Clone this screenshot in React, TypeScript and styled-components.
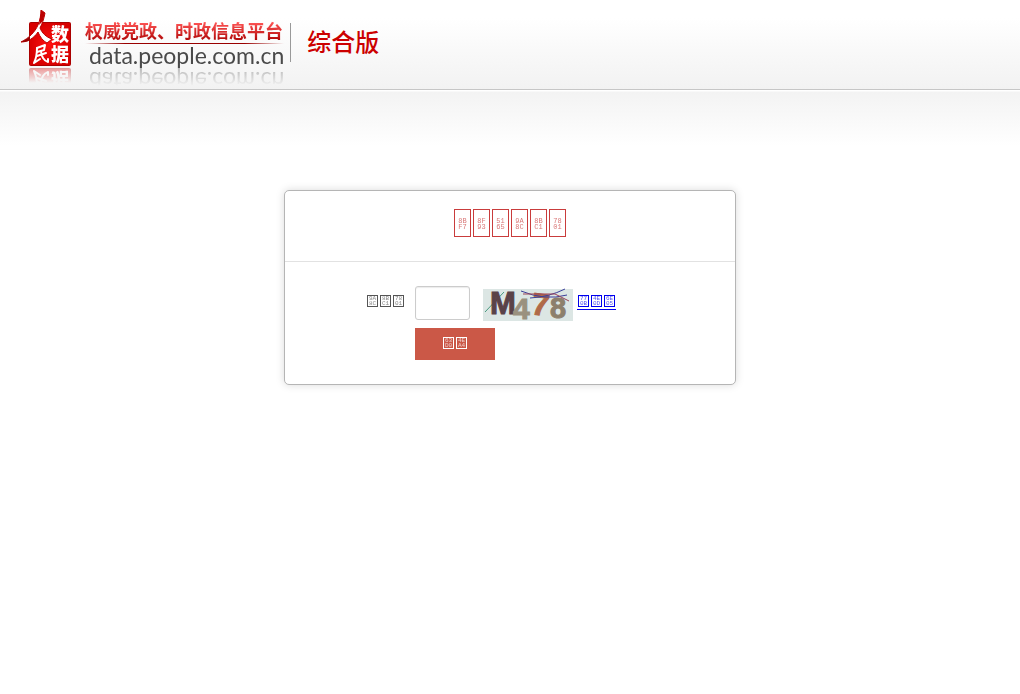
import React from "react";
import styled, { createGlobalStyle, css } from "styled-components";

const GlobalStyle = createGlobalStyle`
  *, *::before, *::after { box-sizing: border-box; }
  body {
    margin: 0;
    background: #fff;
    color: #555;
    font: 12px/20px "Liberation Sans", "Noto Sans CJK SC", sans-serif;
  }
`;

const Header = styled.header`
  display: flex;
  align-items: flex-start;
  height: 90px;
  padding: 10px 20px 0;
  border-bottom: 1px solid #c6c6c6;
  background: linear-gradient(#fff 20%, #f2f2f2);
`;

const Emblem = styled.svg`
  flex: none;
  width: 52px;
  height: 57px;
  -webkit-box-reflect: below 0 linear-gradient(transparent 72%, rgba(0, 0, 0, 0.4));
`;

const Brand = styled.div`
  margin: 10px 6px 0 13px;
`;

const Slogan = styled.div`
  height: 23px;
  font: 700 18px/20px "Noto Sans CJK SC", sans-serif;
  white-space: nowrap;
  color: transparent;
  background: linear-gradient(#f55 10%, #a00 95%);
  background-clip: text;
`;

const Rule = styled.div`
  height: 1px;
  background: linear-gradient(90deg, transparent, #900 20%, #900 80%, transparent);
`;

const Domain = styled.div`
  height: 24px;
  padding-left: 4px;
  font: 23px/22px Lato, sans-serif;
  color: #4a4a4a;
  -webkit-box-reflect: below 0 linear-gradient(transparent 25%, rgba(0, 0, 0, 0.35));
`;

const Edition = styled.div`
  height: 39px;
  margin-top: 13px;
  padding-left: 16px;
  border-left: 1px solid #999;
  font: 500 24px/36px "Noto Sans CJK SC", sans-serif;
  color: #c00;
`;

const Main = styled.main`
  padding: 100px 20px 40px;
  background: linear-gradient(#fff 1px, #f3f3f3 2px, #fff 56px);
`;

const Card = styled.form`
  width: 100%;
  max-width: 452px;
  margin: 0 auto;
  border: 1px solid #b5b5b5;
  border-radius: 5px;
  background: #fff;
  box-shadow: 0 0 8px rgba(0, 0, 0, 0.15);
`;

const Title = styled.h1`
  display: flex;
  justify-content: center;
  height: 71px;
  margin: 0;
  padding-top: 18px;
  border-bottom: 1px solid #e2e2e2;
  color: #c93c3c;
`;

const Fields = styled.div`
  display: grid;
  grid-template-columns: 120px 1fr;
  column-gap: 10px;
  row-gap: 7px;
  padding: 24px 0;
`;

const Label = styled.label`
  display: flex;
  justify-content: flex-end;
  padding-top: 9px;
`;

const Row = styled.div`
  display: flex;
  align-items: flex-start;
`;

const CodeInput = styled.input`
  width: 55px;
  height: 34px;
  padding: 4px 6px;
  border: 1px solid #ccc;
  border-radius: 3px;
  background: #fff;
  box-shadow: inset 0 1px 1px rgba(0, 0, 0, 0.08);
  font: 14px "Liberation Sans", sans-serif;
`;

const Captcha = styled.svg`
  flex: none;
  width: 90px;
  height: 32px;
  margin: 3px 4px 0 13px;
  overflow: visible;
`;

const Refresh = styled.a`
  display: flex;
  height: 15px;
  margin-top: 9px;
  border-bottom: 1px solid #00e;
  color: #00e;
  text-decoration: none;
`;

const Submit = styled.button`
  grid-column: 2;
  display: flex;
  justify-content: center;
  width: 80px;
  height: 32px;
  padding: 9px 0 0;
  border: 0;
  background: #cb5847;
  color: #fff;
  cursor: pointer;
`;

const Glyph = styled.span<{ $large?: boolean }>`
  display: flex;
  flex-direction: column;
  align-items: center;
  justify-content: center;
  width: 11px;
  height: 12px;
  margin: 0 1px;
  border: 1px solid currentColor;
  font: 6px/5px "Liberation Mono", monospace;
  ${(p) =>
    p.$large &&
    css`
      width: 17px;
      height: 28px;
      padding-top: 1px;
      font-size: 7px;
      line-height: 6px;
    `}
`;

const Digits = styled.span`
  opacity: 0.7;
`;

function CodePoints({ codes, large }: { codes: string[]; large?: boolean }) {
  return (
    <>
      {codes.map((code) => (
        <Glyph key={code} $large={large}>
          <Digits>{code.slice(0, 2)}</Digits>
          <Digits>{code.slice(2)}</Digits>
        </Glyph>
      ))}
    </>
  );
}

function Logo() {
  return (
    <Emblem viewBox="0 0 52 57" role="img" aria-label="人民数据">
      <defs>
        <radialGradient id="seal">
          <stop offset="0" stopColor="#f11" />
          <stop offset="1" stopColor="#d80000" />
        </radialGradient>
      </defs>
      <rect x="9.5" y="12.5" width="41" height="43" rx="1" fill="url(#seal)" stroke="#a00" />
      <g fontFamily="'Noto Sans CJK SC', sans-serif" fontWeight="900" fontSize="18" fill="#fff">
        <text x="31" y="31">数</text>
        <text x="31" y="51">据</text>
      </g>
      <path
        d="M21 0L25 3C24 9 22 14 20 18C22 23 26 27 32 29L27 33C23 31 20 27 18 22C14 28 8 32 1 32C9 28 15 22 18 15C20 10 21 5 21 0Z"
        fill="#fff"
        stroke="#b00"
        strokeWidth="1"
        strokeLinejoin="round"
      />
      <path d="M21 0L25 3L23 11L19 15Z" fill="#b00" />
      <path d="M1 32C5 30 8 28 10 26L10 30C7 32 4 32 1 32Z" fill="#900" />
      <g fill="none" stroke="#fff" strokeWidth="2" strokeLinecap="round" strokeLinejoin="round">
        <path d="M17 38L25 35L24 40L17 42" />
        <path d="M17 38C17 44 16 49 14 53L20 49" />
        <path d="M17 46L26 43M21 41C21 46 24 51 28 52L28 49" />
      </g>
    </Emblem>
  );
}

export default function App() {
  return (
    <>
      <GlobalStyle />
      <Header>
        <Logo />
        <Brand>
          <Slogan>权威党政、时政信息平台</Slogan>
          <Rule />
          <Domain>data.people.com.cn</Domain>
        </Brand>
        <Edition>综合版</Edition>
      </Header>
      <Main>
        <Card onSubmit={(e) => e.preventDefault()}>
          <Title aria-label="请输入验证码">
            <CodePoints large codes={["8BF7", "8F93", "5165", "9A8C", "8BC1", "7801"]} />
          </Title>
          <Fields>
            <Label htmlFor="code" aria-label="验证码">
              <CodePoints codes={["9A8C", "8BC1", "7801"]} />
            </Label>
            <Row>
              <CodeInput id="code" name="code" type="text" autoComplete="off" />
              <Captcha viewBox="0 0 90 32">
                <rect width="90" height="32" fill="#dce6e4" />
                <path d="M2 23L21 3" stroke="#4a9a80" />
                <g fontFamily="'Liberation Sans', sans-serif" fontWeight="700" strokeWidth="1">
                  <text x="7" y="25" fontSize="31" fill="#5a4248" stroke="#5a4248">M</text>
                  <text x="30" y="30" fontSize="30" fill="#9a917f" stroke="#9a917f">4</text>
                  <text x="49" y="26" fontSize="31" fill="#b06a48" stroke="#b06a48" transform="rotate(8 55 14)">7</text>
                  <text x="67" y="29" fontSize="29" fill="#8d806c" stroke="#8d806c">8</text>
                </g>
                <path d="M38 2Q62 12 84 6M47 9Q66 8 82 0" fill="none" stroke="#3b3f9a" />
                <path d="M40 5L72 5L86 12" fill="none" stroke="#9b4355" />
              </Captcha>
              <Refresh href="#" aria-label="看不清">
                <CodePoints codes={["770B", "4E0D", "6E05"]} />
              </Refresh>
            </Row>
            <Submit type="submit" aria-label="提交">
              <CodePoints codes={["63D0", "4EA4"]} />
            </Submit>
          </Fields>
        </Card>
      </Main>
    </>
  );
}
